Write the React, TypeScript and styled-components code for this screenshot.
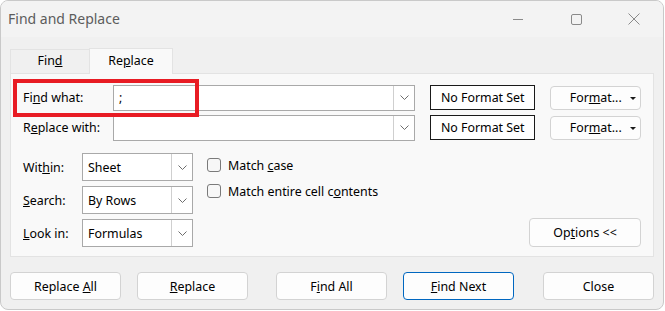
import React from "react";
import styled, { createGlobalStyle, css } from "styled-components";

const GlobalStyle = createGlobalStyle`
  html, body {
    margin: 0;
    padding: 0;
    background: #ffffff;
  }
  body {
    font-family: "Noto Sans", "Open Sans", sans-serif;
    font-size: 12.4px;
    color: #000;
  }
`;

const Window = styled.div`
  box-sizing: border-box;
  width: 664px;
  height: 310px;
  border: 1px solid #c9c9c9;
  border-radius: 8px;
  background: #f0f0f0;
  overflow: hidden;
  display: flex;
  flex-direction: column;
`;

const TitleBar = styled.div`
  height: 36px;
  display: flex;
  align-items: center;
  background: #f3f3f3;
  padding-left: 7px;
`;

const Title = styled.div`
  flex: 1;
  font-size: 14px;
  color: #5c5c5c;
  padding-bottom: 1px;
`;

const WinControls = styled.div`
  display: flex;
  align-items: center;
  height: 100%;
`;

const WinButton = styled.div`
  width: 58px;
  height: 100%;
  display: flex;
  align-items: center;
  justify-content: center;
  color: #8a8a8a;
`;

const Body = styled.div`
  flex: 1;
  display: flex;
  flex-direction: column;
  padding: 10px 0 0 9px;
`;

const TabStrip = styled.div`
  display: flex;
  align-items: flex-end;
  height: 26px;
`;

const Tab = styled.div<{ $active?: boolean }>`
  box-sizing: border-box;
  display: flex;
  align-items: center;
  justify-content: center;
  border: 1px solid #e3e3e3;
  border-bottom: none;
  ${(p) =>
    p.$active
      ? css`
          width: 84px;
          height: 26px;
          background: #f9f9f9;
          position: relative;
          top: 1px;
          z-index: 1;
        `
      : css`
          width: 79px;
          height: 24px;
          background: #f0f0f0;
          border-right: none;
        `}
  padding-bottom: 2px;
`;

const Panel = styled.div`
  box-sizing: border-box;
  position: relative;
  width: 644px;
  height: 184px;
  border: 1px solid #e3e3e3;
  background: #f9f9f9;
  padding: 11px 12px 9px 12px;
  display: flex;
  flex-direction: column;
  gap: 5px;
`;

const Highlight = styled.div`
  position: absolute;
  left: 2px;
  top: 5px;
  width: 186px;
  height: 38px;
  box-sizing: border-box;
  border: 4px solid #e81c24;
  pointer-events: none;
`;

const FieldRow = styled.div`
  display: flex;
  align-items: center;
  height: 25px;
`;

const FieldLabel = styled.div<{ $width: number }>`
  width: ${(p) => p.$width}px;
  flex: none;
  white-space: nowrap;
`;

const Combo = styled.div<{ $width: number; $height: number }>`
  box-sizing: border-box;
  width: ${(p) => p.$width}px;
  height: ${(p) => p.$height}px;
  flex: none;
  display: flex;
  border: 1px solid #a9a9a9;
  background: #ffffff;
`;

const ComboText = styled.div`
  flex: 1;
  display: flex;
  align-items: center;
  padding-left: 5px;
`;

const ComboArrow = styled.div`
  width: 20px;
  border-left: 1px solid #cfcfcf;
  display: flex;
  align-items: center;
  justify-content: center;
  color: #6d6d6d;
`;

const FormatPreview = styled.div`
  box-sizing: border-box;
  width: 106px;
  height: 25px;
  margin-left: 15px;
  border: 1px solid #1a1a1a;
  background: #ffffff;
  display: flex;
  align-items: center;
  justify-content: center;
`;

const FormatButton = styled.div`
  box-sizing: border-box;
  position: relative;
  width: 91px;
  height: 24px;
  margin-left: 15px;
  border: 1px solid #d3d3d3;
  border-radius: 4px;
  background: #fdfdfd;
  display: flex;
  align-items: center;
  justify-content: center;
`;

const Caret = styled.span`
  position: absolute;
  right: 4px;
  top: 10px;
  width: 0;
  height: 0;
  border-left: 3px solid transparent;
  border-right: 3px solid transparent;
  border-top: 3px solid #1a1a1a;
`;

const OptionsArea = styled.div`
  display: flex;
  align-items: flex-start;
  margin-top: 8px;
  flex: 1;
`;

const SelectGrid = styled.div`
  display: grid;
  grid-template-columns: 59px 111px;
  row-gap: 5px;
  align-items: center;
`;

const CheckList = styled.div`
  display: flex;
  flex-direction: column;
  gap: 12px;
  margin-left: 14px;
  padding-top: 5px;
`;

const CheckRow = styled.label`
  display: flex;
  align-items: center;
  gap: 7px;
  height: 14px;
`;

const CheckBox = styled.span`
  box-sizing: border-box;
  width: 14px;
  height: 14px;
  border: 1px solid #7a7a7a;
  border-radius: 3px;
  background: #f7f7f7;
`;

const OptionsButton = styled.div`
  box-sizing: border-box;
  margin-left: auto;
  align-self: flex-end;
  width: 112px;
  height: 29px;
  border: 1px solid #d3d3d3;
  border-radius: 4px;
  background: #fdfdfd;
  display: flex;
  align-items: center;
  justify-content: center;
`;

const ButtonBar = styled.div`
  display: flex;
  margin-top: 15px;
`;

const Button = styled.div<{ $before?: number; $primary?: boolean }>`
  box-sizing: border-box;
  width: 111px;
  height: 28px;
  margin-left: ${(p) => p.$before ?? 0}px;
  border: 1px solid ${(p) => (p.$primary ? "#0067c0" : "#d3d3d3")};
  border-radius: 4px;
  background: #fdfdfd;
  display: flex;
  align-items: center;
  justify-content: center;
`;

const Chevron = () => (
  <svg width="9" height="5" viewBox="0 0 9 5">
    <path d="M0.5 0.5 L4.5 4.5 L8.5 0.5" fill="none" stroke="currentColor" strokeWidth="1" />
  </svg>
);

const ComboBox = ({
  width,
  height,
  value,
}: {
  width: number;
  height: number;
  value: string;
}) => (
  <Combo $width={width} $height={height}>
    <ComboText>{value}</ComboText>
    <ComboArrow>
      <Chevron />
    </ComboArrow>
  </Combo>
);

const App = () => {
  return (
    <>
      <GlobalStyle />
      <Window>
        <TitleBar>
          <Title>Find and Replace</Title>
          <WinControls>
            <WinButton>
              <svg width="10" height="10" viewBox="0 0 10 10">
                <path d="M0 5.5 H10" stroke="currentColor" strokeWidth="1" />
              </svg>
            </WinButton>
            <WinButton>
              <svg width="11" height="11" viewBox="0 0 11 11">
                <rect x="0.5" y="0.5" width="10" height="10" rx="1.5" fill="none" stroke="currentColor" strokeWidth="1" />
              </svg>
            </WinButton>
            <WinButton>
              <svg width="12" height="12" viewBox="0 0 12 12">
                <path d="M0.5 0.5 L11.5 11.5 M11.5 0.5 L0.5 11.5" stroke="currentColor" strokeWidth="1" />
              </svg>
            </WinButton>
          </WinControls>
        </TitleBar>
        <Body>
          <TabStrip>
            <Tab>
              <span>
                Fin<u>d</u>
              </span>
            </Tab>
            <Tab $active>
              <span>
                Re<u>p</u>lace
              </span>
            </Tab>
          </TabStrip>
          <Panel>
            <FieldRow>
              <FieldLabel $width={90}>
                Fi<u>n</u>d what:
              </FieldLabel>
              <ComboBox width={302} height={26} value=";" />
              <FormatPreview>No Format Set</FormatPreview>
              <FormatButton>
                <span>
                  For<u>m</u>at...
                </span>
                <Caret />
              </FormatButton>
            </FieldRow>
            <FieldRow>
              <FieldLabel $width={90}>
                R<u>e</u>place with:
              </FieldLabel>
              <ComboBox width={302} height={26} value="" />
              <FormatPreview>No Format Set</FormatPreview>
              <FormatButton>
                <span>
                  For<u>m</u>at...
                </span>
                <Caret />
              </FormatButton>
            </FieldRow>
            <OptionsArea>
              <SelectGrid>
                <FieldLabel $width={59}>
                  Wit<u>h</u>in:
                </FieldLabel>
                <ComboBox width={111} height={28} value="Sheet" />
                <FieldLabel $width={59}>
                  <u>S</u>earch:
                </FieldLabel>
                <ComboBox width={111} height={28} value="By Rows" />
                <FieldLabel $width={59}>
                  <u>L</u>ook in:
                </FieldLabel>
                <ComboBox width={111} height={28} value="Formulas" />
              </SelectGrid>
              <CheckList>
                <CheckRow>
                  <CheckBox />
                  <span>
                    Match <u>c</u>ase
                  </span>
                </CheckRow>
                <CheckRow>
                  <CheckBox />
                  <span>
                    Match entire cell c<u>o</u>ntents
                  </span>
                </CheckRow>
              </CheckList>
              <OptionsButton>
                <span>
                  Op<u>t</u>ions &lt;&lt;
                </span>
              </OptionsButton>
            </OptionsArea>
            <Highlight />
          </Panel>
          <ButtonBar>
            <Button>
              <span>
                Replace <u>A</u>ll
              </span>
            </Button>
            <Button $before={16}>
              <span>
                <u>R</u>eplace
              </span>
            </Button>
            <Button $before={28}>
              <span>
                F<u>i</u>nd All
              </span>
            </Button>
            <Button $before={16} $primary>
              <span>
                <u>F</u>ind Next
              </span>
            </Button>
            <Button $before={29}>Close</Button>
          </ButtonBar>
        </Body>
      </Window>
    </>
  );
};

export default App;
